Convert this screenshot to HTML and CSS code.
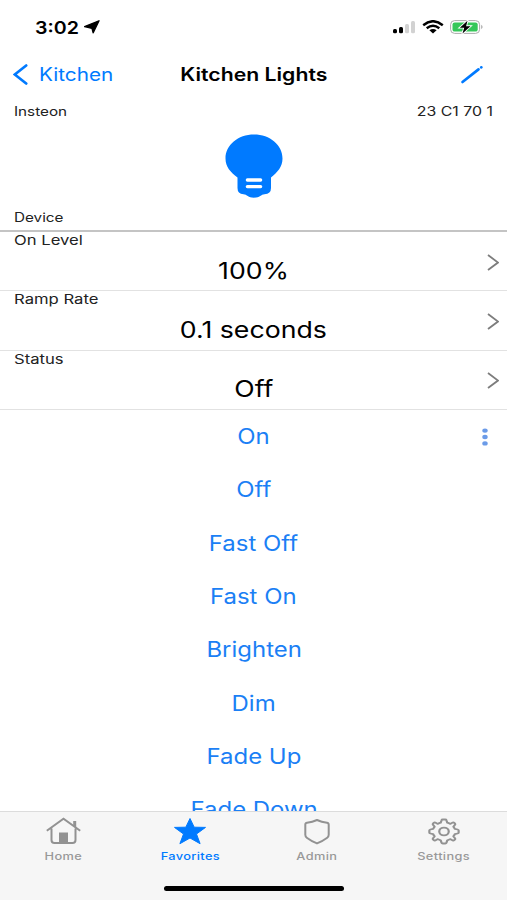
FILE: index.html
```
<!DOCTYPE html>
<html lang="en">
<head>
<meta charset="utf-8">
<title>Kitchen Lights</title>
<link rel="stylesheet" href="styles.css">
</head>
<body>
<div class="screen">
  <header class="status-bar">
    <div class="clock">
      <span class="wide time">3:02</span>
      <svg class="location" viewBox="0 0 16 14"><path d="M15 .8 9.2 12.8 8 8.4.6 6.6Z" fill="#000" stroke="#000" stroke-width="1.4" stroke-linejoin="round"/></svg>
    </div>
    <div class="indicators">
      <svg width="24" height="14" viewBox="0 0 24 14"><rect x="1" y="9" width="4" height="4.3" rx="1.5"/><rect x="7" y="7" width="4" height="6.3" rx="1.5"/><rect x="13" y="4" width="4" height="9.3" rx="1.5" fill="#d2d2d2"/><rect x="19" y="1" width="4" height="12.3" rx="1.5" fill="#d2d2d2"/></svg>
      <svg class="wifi" width="22" height="14" viewBox="0 0 22 14"><g fill="none" stroke="#000" stroke-width="2.4"><path d="M1.2 5.2Q11-2.8 20.8 5.2"/><path d="M4.7 8.2Q11 3.2 17.3 8.2"/></g><path d="M7.4 10.2Q11 7.6 14.6 10.2L11 13.4Z"/></svg>
      <svg class="battery" width="33" height="14" viewBox="0 0 33 14"><rect x=".6" y=".6" width="29" height="12.8" rx="4" fill="#fff" stroke="#aaa"/><rect x="2.5" y="2.4" width="25.2" height="9.2" rx="2.2" fill="#35c759"/><path d="M31.2 4.8Q34 7 31.2 9.2Z" fill="#aaa"/><path d="M17.5.8 9.8 7.7h4.4L12.5 13.4l8-7.2h-4.4Z" stroke="#fff" stroke-width="1.8" paint-order="stroke"/></svg>
    </div>
  </header>

  <nav class="nav-bar">
    <a class="back"><svg width="15" height="21" viewBox="0 0 15 21"><path d="M13.2 1.5 1.8 10.5l11.4 9"/></svg><span class="wide back-label">Kitchen</span></a>
    <h1 class="wide title">Kitchen Lights</h1>
    <svg class="edit" width="24" height="20" viewBox="0 0 24 20"><path d="M2.5 17 18.5 4.4M21.2 2.4l.2-.1"/></svg>
  </nav>

  <section class="summary">
    <div class="summary-top"><span class="wide small">Insteon</span><span class="wide small address">23 C1 70 1</span></div>
    <svg class="bulb" width="58" height="65" viewBox="0 0 58 65"><path d="M29 .5C45 .5 57.5 11 57.5 24.5C57.5 33 52.5 38 46 43.5V54Q46 60 39.5 60.3C36 60.5 35 63.7 29 63.7S22 60.5 18.5 60.3Q12.5 60 12.5 54V43.5C5.5 38 .5 33 .5 24.5C.5 11 13 .5 29 .5Z" fill="#007aff"/><path d="M22.4 46h13.2M22.4 52.6h13.2" stroke="#fff" stroke-width="3.4" stroke-linecap="round"/></svg>
    <span class="wide small device">Device</span>
  </section>

  <main class="content">
    <div class="setting"><span class="wide small">On Level</span><span class="wide value">100%</span><svg class="chevron" viewBox="0 0 12 17"><path d="m1 1 10 7.5L1 16"/></svg></div>
    <div class="setting"><span class="wide small">Ramp Rate</span><span class="wide value">0.1 seconds</span><svg class="chevron" viewBox="0 0 12 17"><path d="m1 1 10 7.5L1 16"/></svg></div>
    <div class="setting"><span class="wide small">Status</span><span class="wide value">Off</span><svg class="chevron" viewBox="0 0 12 17"><path d="m1 1 10 7.5L1 16"/></svg></div>
    <div class="action"><span class="wide">On</span><svg class="more" width="6" height="18" viewBox="0 0 6 18"><ellipse cx="3" cy="2.6" rx="2.7" ry="2.2"/><ellipse cx="3" cy="9" rx="2.7" ry="2.2"/><ellipse cx="3" cy="15.4" rx="2.7" ry="2.2"/></svg></div>
    <div class="action"><span class="wide">Off</span></div>
    <div class="action"><span class="wide">Fast Off</span></div>
    <div class="action"><span class="wide">Fast On</span></div>
    <div class="action"><span class="wide">Brighten</span></div>
    <div class="action"><span class="wide">Dim</span></div>
    <div class="action"><span class="wide">Fade Up</span></div>
    <div class="action"><span class="wide">Fade Down</span></div>
  </main>

  <footer class="tab-bar">
    <div class="tabs">
      <a class="tab"><svg width="36" height="28" viewBox="0 0 36 28"><path d="m1.8 13.8 16.7-12 16.7 12M6.5 11.5V23q0 3 3 3h18q3 0 3-3V11.5" fill="none" stroke="#929292" stroke-width="2"/><path d="M14 15.5h9V26h-9ZM28.2 4h3v7l-3-2Z" fill="#929292"/></svg><span class="wide">Home</span></a>
      <a class="tab active"><svg width="36" height="28" viewBox="0 0 36 28"><path d="m18 1.5 4.2 8.7 11.3.2-9 6.6 3.6 9.7L18 21l-10.1 5.7L11.5 17l-9-6.6 11.3-.2Z" fill="#007aff" stroke="#007aff" stroke-linejoin="round"/></svg><span class="wide">Favorites</span></a>
      <a class="tab"><svg width="36" height="28" viewBox="0 0 36 28"><path d="M18 3Q22.5 5.2 28 5.8Q29.7 6 29.7 7.8V17.8Q29.7 19.6 28.2 20.7Q24 23.9 18 26.4Q12 23.9 7.8 20.7Q6.3 19.6 6.3 17.8V7.8Q6.3 6 8 5.8Q13.5 5.2 18 3Z" fill="none" stroke="#929292" stroke-width="2" stroke-linejoin="round"/></svg><span class="wide">Admin</span></a>
      <a class="tab"><svg width="36" height="28" viewBox="0 0 36 28"><g transform="translate(18 14.5) scale(1.22 1)" fill="none" stroke="#929292" stroke-width="1.8" stroke-linejoin="round"><path d="M-2-11.2Q-1.8-12 -1-12H1Q1.8-12 2-11.2L2.7-8.8Q4-8.4 5-7.6L7.2-8.9Q7.9-9.2 8.4-8.7L9-8Q9.5-7.4 9-6.8L7.7-4.8Q8.5-3.7 8.9-2.6L11.2-2Q12-1.8 12-1V1Q12 1.8 11.2 2L8.9 2.6Q8.5 3.7 7.7 4.8L9 6.8Q9.5 7.4 9 8L8.4 8.7Q7.9 9.2 7.2 8.9L5 7.6Q4 8.4 2.7 8.8L2 11.2Q1.8 12 1 12H-1Q-1.8 12-2 11.2L-2.7 8.8Q-4 8.4-5 7.6L-7.2 8.9Q-7.9 9.2-8.4 8.7L-9 8Q-9.5 7.4-9 6.8L-7.7 4.8Q-8.5 3.7-8.9 2.6L-11.2 2Q-12 1.8-12 1V-1Q-12-1.8-11.2-2L-8.9-2.6Q-8.5-3.7-7.7-4.8L-9-6.8Q-9.5-7.4-9-8L-8.4-8.7Q-7.9-9.2-7.2-8.9L-5-7.6Q-4-8.4-2.7-8.8Z"/><circle r="3.9"/></g></svg><span class="wide">Settings</span></a>
    </div>
    <div class="home-indicator"></div>
  </footer>
</div>
</body>
</html>
```

FILE: styles.css
```
* { box-sizing: border-box; }
body { margin: 0; background: #fff; color: #000; font-family: Inter, "Liberation Sans", sans-serif; }
.screen { width: 507px; height: 900px; display: flex; flex-direction: column; overflow: hidden; }
svg { display: block; flex: none; }

/* Wide letterforms: every label is stretched horizontally. */
.wide { display: inline-block; transform: scaleX(1.22); transform-origin: center; white-space: nowrap; }

.status-bar { height: 50px; padding: 4px 24px 0 35px; display: flex; justify-content: space-between; align-items: center; }
.clock { display: flex; align-items: center; }
.time { width: 49px; font-size: 17.5px; font-weight: 600; transform: scaleX(1.12); transform-origin: left; }
.location { width: 16px; height: 14px; }
.indicators { display: flex; align-items: center; }
.wifi { margin: 0 6px 0 6px; }

.nav-bar { height: 49px; padding: 0 13px; display: grid; grid-template-columns: 1fr auto 1fr; align-items: center; }
.back { display: flex; align-items: center; gap: 11px; color: #007aff; font-size: 18px; }
.back path, .edit path { fill: none; stroke: #007aff; stroke-width: 2.7; stroke-linecap: round; }
.back-label { transform: scaleX(1.15); transform-origin: left; }
.title { margin: 0; font-size: 18px; font-weight: 600; transform: translateX(.5px) scaleX(1.18); }
.edit { justify-self: end; margin-right: 10px; }

.summary { height: 133px; padding: 4px 14px 4px; border-bottom: 2px solid #c4c4c4; display: flex; flex-direction: column; }
.small { font-size: 12.5px; line-height: 18px; color: #222; transform-origin: left; }
.summary-top { display: flex; justify-content: space-between; }
.address { transform: scaleX(1.27); transform-origin: right; }
.bulb { align-self: center; margin-top: 13px; }
.device { align-self: flex-start; margin-top: 10px; }

.content { flex: 1; min-height: 0; overflow: hidden; }
.setting { height: 59.3px; border-bottom: 1px solid #e2e2e2; display: grid; grid-template-columns: 1fr auto 1fr; padding: 0 8px 0 14px; }
.setting .small { grid-column: 1; grid-row: 1; justify-self: start; align-self: start; font-size: 13px; line-height: 17px; transform: scaleX(1.28); }
.value { grid-column: 2; grid-row: 1; font-size: 23px; line-height: 28px; padding-top: 24.6px; margin: 0 6px 0 0; transform: scaleX(1.16); }
.chevron { grid-column: 3; grid-row: 1; justify-self: end; align-self: center; width: 12px; height: 17px; margin-top: 2px; }
.chevron path { fill: none; stroke: #7d7d7d; stroke-width: 1.8; }
.action { height: 53.3px; display: grid; grid-template-columns: 1fr auto 1fr; align-items: center; padding: 0 19px; font-size: 21px; color: #1b7ff5; }
.action .wide { grid-column: 2; transform: translateX(.3px) scaleX(1.14); }
.more { grid-column: 3; justify-self: end; fill: #6b9be8; }

.tab-bar { height: 89px; background: #f6f6f6; border-top: 1px solid #dcdcdc; display: flex; flex-direction: column; align-items: center; }
.tabs { width: 100%; height: 74px; display: grid; grid-template-columns: repeat(4, 1fr); }
.tab { display: flex; flex-direction: column; align-items: center; padding-top: 5px; color: #999; font-size: 10.5px; font-weight: 500; line-height: 13px; letter-spacing: .3px; }
.tab .wide { margin-top: 5px; }
.tab.active { color: #007aff; }
.home-indicator { width: 180px; height: 5px; border-radius: 3px; background: #000; }
```
